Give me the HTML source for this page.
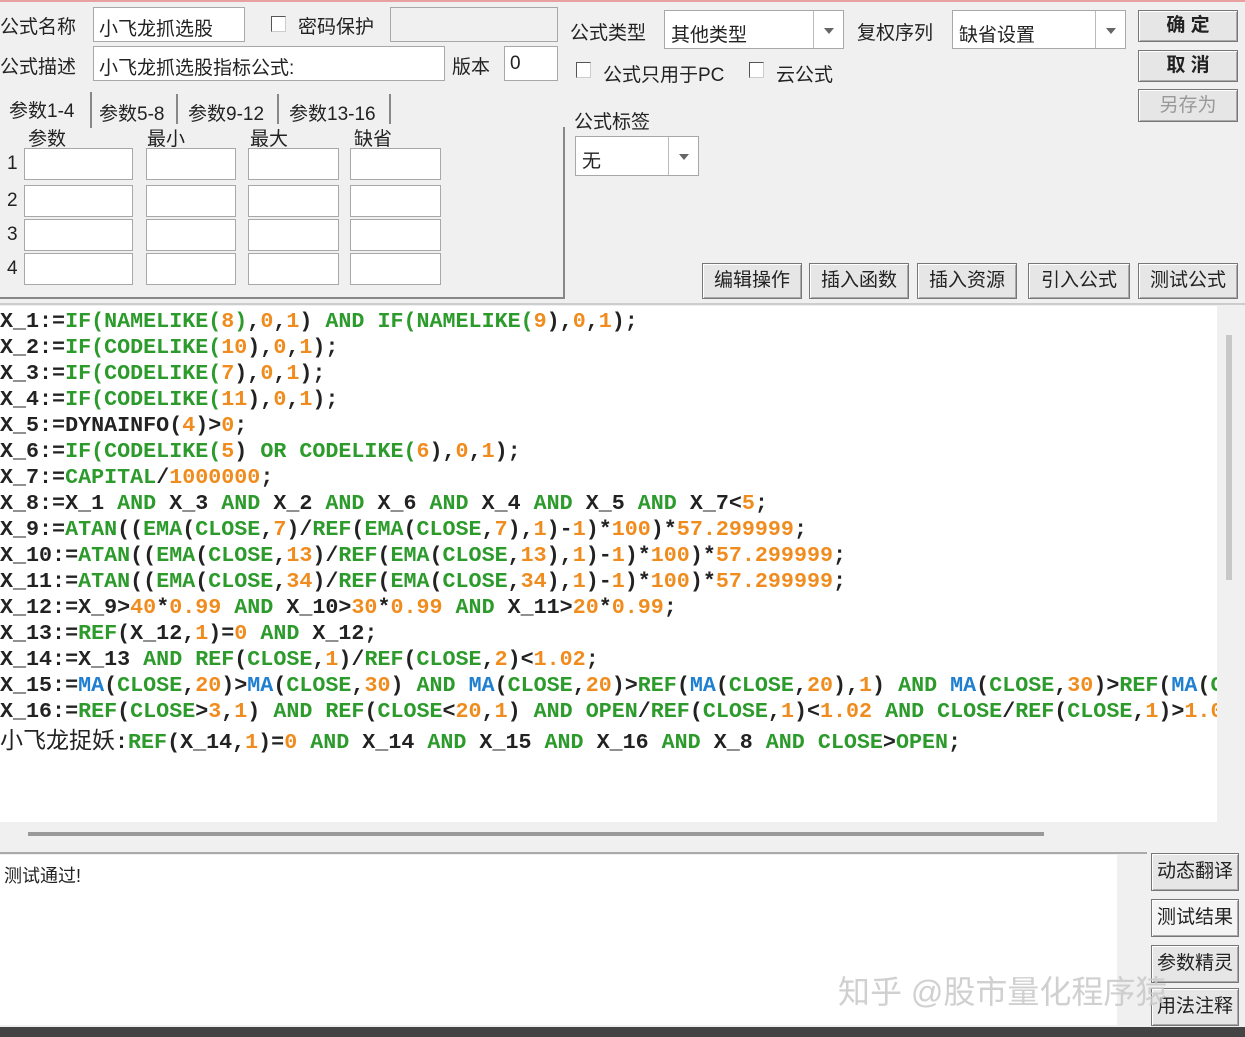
<!DOCTYPE html>
<html><head><meta charset="utf-8"><style>
*{margin:0;padding:0;box-sizing:border-box}
body{width:1245px;height:1037px;background:#f0f0f0;position:relative;overflow:hidden;font-family:"Liberation Sans","Noto Sans CJK SC",sans-serif;font-size:19px;color:#222}
.a{position:absolute}
.in{position:absolute;background:#fff;border:1px solid #a8a8a8}
.t{position:absolute;white-space:nowrap}
.cb{position:absolute;width:15px;height:16px;background:#fff;border:1px solid #555;border-right-color:#ccc;border-bottom-color:#ccc}
.btn{position:absolute;background:#e6e6e6;border:1px solid #777;box-shadow:inset 1px 1px 0 #fff,inset -1px -1px 0 #aaa;text-align:center;white-space:nowrap;font-size:19px}
.dd{position:absolute;right:0;top:0;bottom:0;width:30px;border-left:1px solid #bbb}
.dd:after{content:"";position:absolute;left:10px;top:50%;margin-top:-2px;border:5px solid transparent;border-top:6px solid #666}
#code{position:absolute;left:0;top:306px;width:1217px;height:516px;background:#fff;overflow:hidden;font-family:"Liberation Mono",monospace;font-weight:bold;font-size:21.7px;line-height:26px;padding-top:3px}
#code div{white-space:nowrap;height:26px}
.g{color:#2c9b2c}.o{color:#f08c1e}.b{color:#1f7fd0}
</style></head><body>
<div class="a" style="left:0;top:0;width:1245px;height:2px;background:#e8a0a0"></div>
<div class="t" style="left:0;top:12px">公式名称</div>
<div class="in" style="left:93px;top:7px;width:152px;height:35px"><span class="t" style="left:5px;top:6px">小飞龙抓选股</span></div>
<div class="cb" style="left:271px;top:16px"></div>
<div class="t" style="left:298px;top:12px">密码保护</div>
<div class="in" style="left:390px;top:7px;width:168px;height:35px;background:#f0f0f0"></div>
<div class="t" style="left:0;top:52px">公式描述</div>
<div class="in" style="left:93px;top:46px;width:352px;height:35px"><span class="t" style="left:5px;top:6px">小飞龙抓选股指标公式:</span></div>
<div class="t" style="left:452px;top:52px">版本</div>
<div class="in" style="left:504px;top:46px;width:54px;height:35px"><span class="t" style="left:5px;top:6px">0</span></div>
<div class="t" style="left:9px;top:96px">参数1-4</div>
<div class="a" style="left:90px;top:92px;width:2px;height:36px;background:#888"></div>
<div class="t" style="left:99px;top:99px">参数5-8</div>
<div class="a" style="left:176px;top:94px;width:2px;height:30px;background:#888"></div>
<div class="t" style="left:188px;top:99px">参数9-12</div>
<div class="a" style="left:277px;top:94px;width:2px;height:30px;background:#888"></div>
<div class="t" style="left:289px;top:99px">参数13-16</div>
<div class="a" style="left:389px;top:94px;width:2px;height:30px;background:#888"></div>
<div class="a" style="left:0;top:127px;width:565px;height:172px;border-right:2px solid #888;border-bottom:2px solid #888"></div>
<div class="t" style="left:28px;top:124px">参数</div>
<div class="t" style="left:147px;top:124px">最小</div>
<div class="t" style="left:250px;top:124px">最大</div>
<div class="t" style="left:354px;top:124px">缺省</div>
<div class="t" style="left:7px;top:153px">1</div><div class="t" style="left:7px;top:190px">2</div><div class="t" style="left:7px;top:224px">3</div><div class="t" style="left:7px;top:258px">4</div>
<div class="in" style="left:24px;top:148px;width:109px;height:32px"></div><div class="in" style="left:146px;top:148px;width:90px;height:32px"></div><div class="in" style="left:248px;top:148px;width:91px;height:32px"></div><div class="in" style="left:350px;top:148px;width:91px;height:32px"></div>
<div class="in" style="left:24px;top:185px;width:109px;height:32px"></div><div class="in" style="left:146px;top:185px;width:90px;height:32px"></div><div class="in" style="left:248px;top:185px;width:91px;height:32px"></div><div class="in" style="left:350px;top:185px;width:91px;height:32px"></div>
<div class="in" style="left:24px;top:219px;width:109px;height:32px"></div><div class="in" style="left:146px;top:219px;width:90px;height:32px"></div><div class="in" style="left:248px;top:219px;width:91px;height:32px"></div><div class="in" style="left:350px;top:219px;width:91px;height:32px"></div>
<div class="in" style="left:24px;top:253px;width:109px;height:32px"></div><div class="in" style="left:146px;top:253px;width:90px;height:32px"></div><div class="in" style="left:248px;top:253px;width:91px;height:32px"></div><div class="in" style="left:350px;top:253px;width:91px;height:32px"></div>
<div class="t" style="left:570px;top:18px">公式类型</div>
<div class="in" style="left:664px;top:10px;width:180px;height:39px"><span class="t" style="left:6px;top:9px">其他类型</span><div class="dd"></div></div>
<div class="t" style="left:857px;top:18px">复权序列</div>
<div class="in" style="left:952px;top:10px;width:174px;height:39px"><span class="t" style="left:6px;top:9px">缺省设置</span><div class="dd"></div></div>
<div class="cb" style="left:576px;top:62px"></div><div class="t" style="left:603px;top:60px">公式只用于PC</div>
<div class="cb" style="left:749px;top:62px"></div><div class="t" style="left:776px;top:60px">云公式</div>
<div class="t" style="left:574px;top:107px">公式标签</div>
<div class="in" style="left:575px;top:136px;width:124px;height:40px"><span class="t" style="left:6px;top:9px">无</span><div class="dd"></div></div>
<div class="btn" style="left:1138px;top:10px;width:100px;height:32px;line-height:30px;font-weight:bold">确 定</div>
<div class="btn" style="left:1138px;top:50px;width:100px;height:32px;line-height:30px;font-weight:bold">取 消</div>
<div class="btn" style="left:1138px;top:89px;width:100px;height:33px;line-height:31px;color:#999">另存为</div>
<div class="btn" style="left:702px;top:263px;width:100px;height:36px;line-height:34px">编辑操作</div>
<div class="btn" style="left:809px;top:263px;width:100px;height:36px;line-height:34px">插入函数</div>
<div class="btn" style="left:917px;top:263px;width:100px;height:36px;line-height:34px">插入资源</div>
<div class="btn" style="left:1028px;top:263px;width:102px;height:36px;line-height:34px">引入公式</div>
<div class="btn" style="left:1138px;top:263px;width:100px;height:36px;line-height:34px">测试公式</div>
<div class="a" style="left:0;top:303px;width:1245px;height:2px;background:#ccc"></div>
<div id="code">
<div>X_1:=<span class="g">IF(NAMELIKE(</span><span class="o">8</span><span class="g">)</span>,<span class="o">0</span>,<span class="o">1</span>) <span class="g">AND</span> <span class="g">IF(NAMELIKE(</span><span class="o">9</span>),<span class="o">0</span>,<span class="o">1</span>);</div>
<div>X_2:=<span class="g">IF(CODELIKE(</span><span class="o">10</span>),<span class="o">0</span>,<span class="o">1</span>);</div>
<div>X_3:=<span class="g">IF(CODELIKE(</span><span class="o">7</span>),<span class="o">0</span>,<span class="o">1</span>);</div>
<div>X_4:=<span class="g">IF(CODELIKE(</span><span class="o">11</span>),<span class="o">0</span>,<span class="o">1</span>);</div>
<div>X_5:=DYNAINFO(<span class="o">4</span>)&gt;<span class="o">0</span>;</div>
<div>X_6:=<span class="g">IF(CODELIKE(</span><span class="o">5</span>) <span class="g">OR</span> <span class="g">CODELIKE(</span><span class="o">6</span>),<span class="o">0</span>,<span class="o">1</span>);</div>
<div>X_7:=<span class="g">CAPITAL</span>/<span class="o">1000000</span>;</div>
<div>X_8:=X_1 <span class="g">AND</span> X_3 <span class="g">AND</span> X_2 <span class="g">AND</span> X_6 <span class="g">AND</span> X_4 <span class="g">AND</span> X_5 <span class="g">AND</span> X_7&lt;<span class="o">5</span>;</div>
<div>X_9:=<span class="g">ATAN</span>((<span class="g">EMA</span>(<span class="g">CLOSE</span>,<span class="o">7</span>)/<span class="g">REF</span>(<span class="g">EMA</span>(<span class="g">CLOSE</span>,<span class="o">7</span>),<span class="o">1</span>)-<span class="o">1</span>)*<span class="o">100</span>)*<span class="o">57.299999</span>;</div>
<div>X_10:=<span class="g">ATAN</span>((<span class="g">EMA</span>(<span class="g">CLOSE</span>,<span class="o">13</span>)/<span class="g">REF</span>(<span class="g">EMA</span>(<span class="g">CLOSE</span>,<span class="o">13</span>),<span class="o">1</span>)-<span class="o">1</span>)*<span class="o">100</span>)*<span class="o">57.299999</span>;</div>
<div>X_11:=<span class="g">ATAN</span>((<span class="g">EMA</span>(<span class="g">CLOSE</span>,<span class="o">34</span>)/<span class="g">REF</span>(<span class="g">EMA</span>(<span class="g">CLOSE</span>,<span class="o">34</span>),<span class="o">1</span>)-<span class="o">1</span>)*<span class="o">100</span>)*<span class="o">57.299999</span>;</div>
<div>X_12:=X_9&gt;<span class="o">40</span>*<span class="o">0.99</span> <span class="g">AND</span> X_10&gt;<span class="o">30</span>*<span class="o">0.99</span> <span class="g">AND</span> X_11&gt;<span class="o">20</span>*<span class="o">0.99</span>;</div>
<div>X_13:=<span class="g">REF</span>(X_12,<span class="o">1</span>)=<span class="o">0</span> <span class="g">AND</span> X_12;</div>
<div>X_14:=X_13 <span class="g">AND</span> <span class="g">REF</span>(<span class="g">CLOSE</span>,<span class="o">1</span>)/<span class="g">REF</span>(<span class="g">CLOSE</span>,<span class="o">2</span>)&lt;<span class="o">1.02</span>;</div>
<div>X_15:=<span class="b">MA</span>(<span class="g">CLOSE</span>,<span class="o">20</span>)&gt;<span class="b">MA</span>(<span class="g">CLOSE</span>,<span class="o">30</span>) <span class="g">AND</span> <span class="b">MA</span>(<span class="g">CLOSE</span>,<span class="o">20</span>)&gt;<span class="g">REF</span>(<span class="b">MA</span>(<span class="g">CLOSE</span>,<span class="o">20</span>),<span class="o">1</span>) <span class="g">AND</span> <span class="b">MA</span>(<span class="g">CLOSE</span>,<span class="o">30</span>)&gt;<span class="g">REF</span>(<span class="b">MA</span>(<span class="g">CLOSE</span>,<span class="o">30</span>),<span class="o">1</span>);</div>
<div>X_16:=<span class="g">REF</span>(<span class="g">CLOSE</span>&gt;<span class="o">3</span>,<span class="o">1</span>) <span class="g">AND</span> <span class="g">REF</span>(<span class="g">CLOSE</span>&lt;<span class="o">20</span>,<span class="o">1</span>) <span class="g">AND</span> <span class="g">OPEN</span>/<span class="g">REF</span>(<span class="g">CLOSE</span>,<span class="o">1</span>)&lt;<span class="o">1.02</span> <span class="g">AND</span> <span class="g">CLOSE</span>/<span class="g">REF</span>(<span class="g">CLOSE</span>,<span class="o">1</span>)&gt;<span class="o">1.05</span>;</div>
<div><span style="font-family:'Noto Sans CJK SC',sans-serif;font-weight:normal;font-size:23px">小飞龙捉妖</span>:<span class="g">REF</span>(X_14,<span class="o">1</span>)=<span class="o">0</span> <span class="g">AND</span> X_14 <span class="g">AND</span> X_15 <span class="g">AND</span> X_16 <span class="g">AND</span> X_8 <span class="g">AND</span> <span class="g">CLOSE</span>&gt;<span class="g">OPEN</span>;</div>
</div>
<div class="a" style="left:1226px;top:335px;width:6px;height:245px;background:#c8c8c8"></div>
<div class="a" style="left:28px;top:832px;width:1016px;height:4px;background:#999"></div>
<div class="a" style="left:0;top:852px;width:1147px;height:2px;background:#aaa"></div>
<div class="a" style="left:0;top:855px;width:1117px;height:170px;background:#fff"></div>
<div class="t" style="left:4px;top:862px;font-size:18px">测试通过!</div>
<div class="btn" style="left:1151px;top:853px;width:88px;height:38px;line-height:36px">动态翻译</div>
<div class="btn" style="left:1151px;top:899px;width:88px;height:38px;line-height:36px;background:#f4f4f4">测试结果</div>
<div class="btn" style="left:1151px;top:945px;width:88px;height:38px;line-height:36px">参数精灵</div>
<div class="btn" style="left:1151px;top:988px;width:88px;height:38px;line-height:36px">用法注释</div>
<div class="t" style="left:838px;top:967px;font-size:32px;color:rgba(200,200,200,.85)">知乎 @股市量化程序猿</div>
<div class="a" style="left:0;top:1027px;width:1245px;height:10px;background:#444"></div>
</body></html>
